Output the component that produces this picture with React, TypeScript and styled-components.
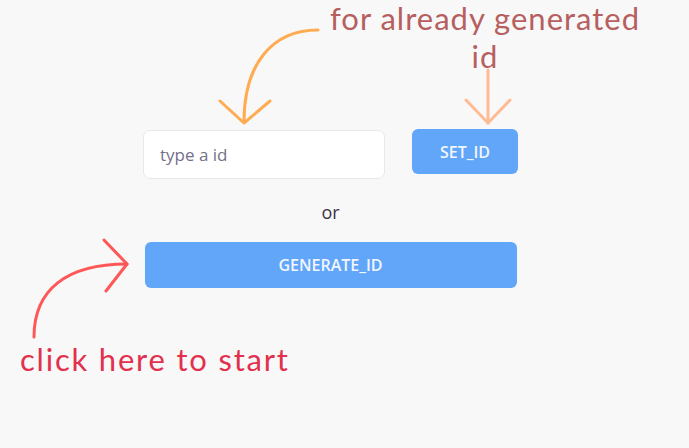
import styled, { createGlobalStyle } from "styled-components";

const GlobalStyle = createGlobalStyle`
    html, body {
        margin: 0;
        background: #f8f8f8;
    }
`

function Annotations() {
    return (
        <Overlay viewBox="0 0 689 448" fill="none" strokeWidth={3} strokeLinecap="round" strokeLinejoin="round">
            <g stroke="#ffab52">
                <path d="M318 30 C 272 30, 244 64, 244 122" />
                <path d="M220 101 L244 123 L270 101" />
            </g>
            <g stroke="#ffbb96">
                <path d="M488 70 L488 123" />
                <path d="M466 100 L488 123 L510 100" />
            </g>
            <g stroke="#ff5757">
                <path d="M34 337 C 34 290, 66 264, 127 264" />
                <path d="M104 240 L127 264 L106 291" />
            </g>
        </Overlay>
    )
}

function App() {
    return (
        <>
            <GlobalStyle />
            <Stage>
                <Note color="#b75f5f" indent={322} width={326} center spacing={1}>
                    for already generated id
                </Note>
                <Form>
                    <IdRow>
                        <IdInput type="text" placeholder="type a id" />
                        <Button width={106} height={45}>SET_ID</Button>
                    </IdRow>
                    <Or>or</Or>
                    <Button width={372} height={46}>GENERATE_ID</Button>
                </Form>
                <Note color="#e2304e" indent={20} top={53} spacing={1.8}>
                    click here to start
                </Note>
                <Annotations />
            </Stage>
        </>
    )
}

const Stage = styled.div`
    position: relative;
    width: 689px;
    height: 448px;
    display: flex;
    flex-direction: column;
    background: #f8f8f8;
    overflow: hidden;
`
const Overlay = styled.svg`
    position: absolute;
    inset: 0;
    width: 689px;
    height: 448px;
    pointer-events: none;
`
const Note = styled.div<{ color: string; indent: number; width?: number; top?: number; center?: boolean; spacing?: number }>`
    margin-left: ${p => p.indent}px;
    margin-top: ${p => p.top ?? 0}px;
    width: ${p => (p.width ? `${p.width}px` : "auto")};
    text-align: ${p => (p.center ? "center" : "left")};
    font-family: "Lato", "Noto Sans", sans-serif;
    font-size: 31px;
    line-height: 37.5px;
    letter-spacing: ${p => p.spacing ?? 0}px;
    color: ${p => p.color};
`
const Form = styled.div`
    margin: 54px 0 0 143px;
    width: 375px;
    display: flex;
    flex-direction: column;
    align-items: center;
    font-family: "Open Sans", "Noto Sans", sans-serif;
`
const IdRow = styled.div`
    width: 100%;
    display: flex;
    align-items: flex-start;
    gap: 27px;
`
const IdInput = styled.input`
    box-sizing: border-box;
    width: 242px;
    height: 49px;
    margin-top: 1px;
    padding: 0 16px;
    border: 1px solid #e6e8ee;
    border-radius: 7px;
    background: #ffffff;
    font-family: inherit;
    font-size: 17px;
    outline: none;
    &::placeholder {
        color: #75708a;
    }
`
const Button = styled.button<{ width: number; height: number }>`
    width: ${p => p.width}px;
    height: ${p => p.height}px;
    border: none;
    border-radius: 6px;
    background: #62a6fa;
    color: #f2f6ff;
    font-family: inherit;
    font-size: 16px;
    font-weight: 600;
    cursor: pointer;
`
const Or = styled.div`
    margin: 23px 0 20px;
    font-size: 18px;
    line-height: 20px;
    color: #3b3348;
`

export default App
